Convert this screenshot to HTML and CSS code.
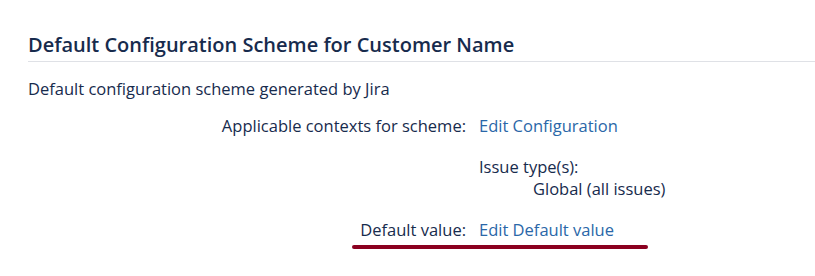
FILE: index.html
```html
<!DOCTYPE html>
<html lang="en">
<head>
  <meta charset="UTF-8">
  <title>Default Configuration Scheme</title>
  <link rel="stylesheet" href="styles.css">
</head>
<body>
  <div class="scheme">
    <h2>Default Configuration Scheme for Customer Name</h2>
    <p class="desc">Default configuration scheme generated by Jira</p>

    <div class="fields">
      <div class="label">Applicable contexts for scheme:</div>
      <div class="value"><a href="#">Edit Configuration</a></div>

      <div class="label"></div>
      <div class="value issue-types">
        <div>Issue type(s):</div>
        <div class="issue-list">Global (all issues)</div>
      </div>

      <div class="label">Default value:</div>
      <div class="value"><a href="#">Edit Default value</a></div>
    </div>
    <div class="mark-line"></div>
  </div>
</body>
</html>
```

FILE: styles.css
```css
body {
  font-family: 'Open Sans', sans-serif;
  font-size: 16.5px;
  color: #172b4d;
  background-color: #fff;
  margin: 0;
  padding: 0;
}

.scheme {
  padding: 31px 0 0 28px;
}

h2 {
  font-size: 20px;
  font-weight: 600;
  margin: 0;
  padding-bottom: 3px;
  border-bottom: 1px solid #dfe1e6;
  line-height: 27px;
}

.desc {
  margin: 16px 0 0;
  line-height: 22px;
}

.fields {
  display: grid;
  grid-template-columns: 438px auto;
  column-gap: 13px;
  row-gap: 19px;
  margin-top: 15px;
  line-height: 22px;
}

.label {
  text-align: right;
}

.fields a {
  color: #2a67a8;
  text-decoration: none;
}

.issue-list {
  padding-left: 54px;
}

.mark-line {
  width: 296px;
  height: 4px;
  margin: 4px 0 0 324px;
  background-color: #8b0020;
  border-radius: 2px;
}
```
